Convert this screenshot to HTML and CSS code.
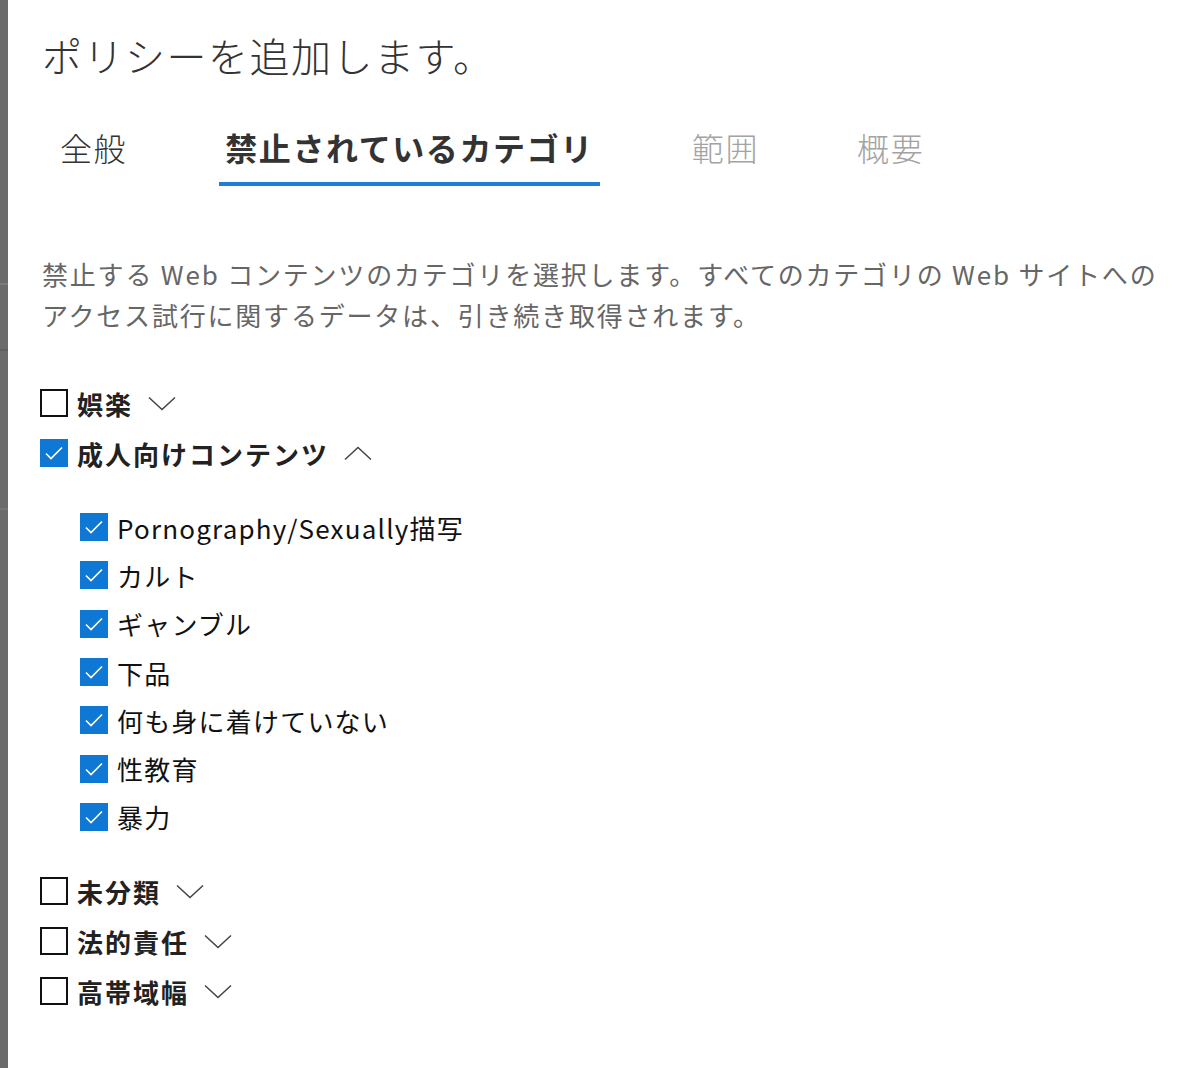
FILE: index.html
```html
<!DOCTYPE html>
<html lang="ja">

<head>
  <meta charset="utf-8">
  <title>ポリシーを追加します。</title>
  <link rel="stylesheet" href="styles.css">
</head>

<body>
  <div class="backdrop"></div>

  <main class="panel">
    <h1 class="title">ポリシーを追加します。</h1>

    <nav class="tabs">
      <span class="tab">全般</span>
      <span class="tab active">禁止されているカテゴリ</span>
      <span class="tab disabled">範囲</span>
      <span class="tab disabled">概要</span>
    </nav>

    <p class="intro">禁止する Web コンテンツのカテゴリを選択します。すべてのカテゴリの Web サイトへの アクセス試行に関するデータは、引き続き取得されます。</p>

    <ul class="categories">
      <li class="category">
        <span class="box"></span>
        <span class="name">娯楽</span>
        <svg class="chevron" width="28" height="15" viewBox="0 0 28 15"><polyline points="1,1.5 14,13.5 27,1.5" /></svg>
      </li>
      <li class="category">
        <span class="box checked"><svg viewBox="0 0 28 28"><polyline points="6,14.5 11,19.5 22,8.5" /></svg></span>
        <span class="name">成人向けコンテンツ</span>
        <svg class="chevron" width="28" height="15" viewBox="0 0 28 15"><polyline points="1,13.5 14,1.5 27,13.5" /></svg>
      </li>
      <li>
        <ul class="subitems">
          <li class="subitem"><span class="box checked"><svg viewBox="0 0 28 28"><polyline points="6,14.5 11,19.5 22,8.5" /></svg></span><span class="label">Pornography/Sexually描写</span></li>
          <li class="subitem"><span class="box checked"><svg viewBox="0 0 28 28"><polyline points="6,14.5 11,19.5 22,8.5" /></svg></span><span class="label">カルト</span></li>
          <li class="subitem"><span class="box checked"><svg viewBox="0 0 28 28"><polyline points="6,14.5 11,19.5 22,8.5" /></svg></span><span class="label">ギャンブル</span></li>
          <li class="subitem"><span class="box checked"><svg viewBox="0 0 28 28"><polyline points="6,14.5 11,19.5 22,8.5" /></svg></span><span class="label">下品</span></li>
          <li class="subitem"><span class="box checked"><svg viewBox="0 0 28 28"><polyline points="6,14.5 11,19.5 22,8.5" /></svg></span><span class="label">何も身に着けていない</span></li>
          <li class="subitem"><span class="box checked"><svg viewBox="0 0 28 28"><polyline points="6,14.5 11,19.5 22,8.5" /></svg></span><span class="label">性教育</span></li>
          <li class="subitem"><span class="box checked"><svg viewBox="0 0 28 28"><polyline points="6,14.5 11,19.5 22,8.5" /></svg></span><span class="label">暴力</span></li>
        </ul>
      </li>
      <li class="category">
        <span class="box"></span>
        <span class="name">未分類</span>
        <svg class="chevron" width="28" height="15" viewBox="0 0 28 15"><polyline points="1,1.5 14,13.5 27,1.5" /></svg>
      </li>
      <li class="category">
        <span class="box"></span>
        <span class="name">法的責任</span>
        <svg class="chevron" width="28" height="15" viewBox="0 0 28 15"><polyline points="1,1.5 14,13.5 27,1.5" /></svg>
      </li>
      <li class="category">
        <span class="box"></span>
        <span class="name">高帯域幅</span>
        <svg class="chevron" width="28" height="15" viewBox="0 0 28 15"><polyline points="1,1.5 14,13.5 27,1.5" /></svg>
      </li>
    </ul>
  </main>
</body>

</html>
```

FILE: styles.css
```css
body {
  margin: 0;
  display: flex;
  min-height: 100vh;
  background-color: #fff;
  font-family: "Noto Sans CJK JP", "Noto Sans", sans-serif;
  color: #222;
}

/* the dimmed page behind the panel */
.backdrop {
  flex: 0 0 8px;
  background:
    linear-gradient(to bottom,
      transparent 283px, #7c7c7c 283px, #7c7c7c 285px,
      transparent 285px, transparent 349px, #5f5f5f 349px, #5f5f5f 351px,
      transparent 351px, transparent 508px, #767676 508px, #767676 510px,
      transparent 510px),
    #6b6b6b;
}

.panel {
  flex: 1;
  padding: 0 30px 0 34px;
}

.title {
  margin: 27px 0 0;
  font-size: 40px;
  line-height: 56px;
  font-weight: 300;
  letter-spacing: 1.5px;
  color: #333;
}

.tabs {
  display: flex;
  gap: 86px;
  margin-top: 43px;
  padding-left: 12px;
}

.tab {
  padding: 0 6px 14px;
  font-size: 32px;
  line-height: 42px;
  letter-spacing: 1.6px;
  color: #333;
  font-weight: 300;
  border-bottom: 4px solid transparent;
}

.tab.active {
  font-weight: 700;
  border-bottom-color: #1e7fd2;
}

.tab.disabled {
  color: #a3a3a3;
}

.intro {
  margin: 67px 0 0;
  font-size: 26px;
  line-height: 41px;
  letter-spacing: 1.8px;
  color: #666;
}

.categories {
  list-style: none;
  margin: 43px 0 0;
  padding: 0;
}

.category {
  display: flex;
  align-items: center;
  height: 50px;
  margin-left: -2px;
}

.name {
  margin-left: 9px;
  font-size: 26px;
  font-weight: 700;
  letter-spacing: 2px;
  color: #222;
}

.chevron {
  margin-left: 15px;
  fill: none;
  stroke: #444;
  stroke-width: 1.5;
}

.box {
  flex: 0 0 28px;
  width: 28px;
  height: 28px;
  box-sizing: border-box;
  border: 2px solid #111;
  background-color: #fff;
}

.box.checked {
  border: none;
  background-color: #0f78d4;
}

.box svg {
  display: block;
  width: 28px;
  height: 28px;
  fill: none;
  stroke: #fff;
  stroke-width: 1.6;
}

.subitems {
  list-style: none;
  margin: 0;
  padding: 25px 0 25px 38px;
}

.subitem {
  display: flex;
  align-items: center;
  height: 48.3px;
}

.label {
  margin-left: 9px;
  font-size: 26px;
  letter-spacing: 1.2px;
  color: #111;
}
```
